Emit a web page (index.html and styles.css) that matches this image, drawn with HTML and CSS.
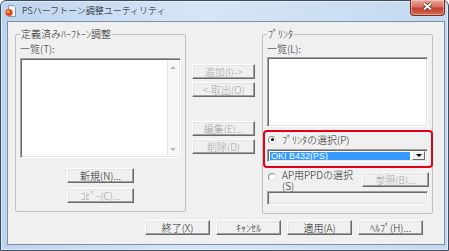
FILE: index.html
```html
<!DOCTYPE html>
<html>
<head>
	<meta charset="utf-8">
	<link rel="stylesheet" href="styles.css">
	<title>PSハーフトーン調整ユーティリティ</title>
</head>
<body>
	<div class="window">
		<div class="titlebar">
			<svg class="appicon" width="11" height="12" viewBox="0 0 11 12">
				<path d="M3.5 0.5h5l2 2v9h-7z" fill="#f6f6f6" stroke="#8a96a6"/>
				<circle cx="4" cy="7.5" r="3.6" fill="#e0471c"/>
				<circle cx="3.2" cy="6.6" r="1.6" fill="#f7a23a"/>
			</svg>
			<span class="title">PSハーフトーン調整ユーティリティ</span>
			<div class="close">
				<svg width="35" height="15" viewBox="0 0 35 15">
					<path d="M14 4.5l7 6M21 4.5l-7 6" stroke="#5a2a22" stroke-width="3.4"/>
					<path d="M14 4.5l7 6M21 4.5l-7 6" stroke="#fff" stroke-width="1.8"/>
				</svg>
			</div>
		</div>

		<div class="client">
			<div class="panes">
				<!-- groupe de gauche -->
				<fieldset class="group">
					<legend>定義済みﾊｰﾌﾄｰﾝ調整</legend>
					<div class="caption">一覧(T):</div>
					<div class="listbox presets">
						<div class="vscroll">
							<span class="arrow up"></span>
							<span class="arrow down"></span>
						</div>
					</div>
					<div class="stack">
						<button class="btn wide">新規(N)...</button>
						<button class="btn wide" disabled>ｺﾋﾟｰ(C)...</button>
					</div>
				</fieldset>

				<!-- boutons du milieu -->
				<div class="middle">
					<button class="btn" disabled>追加(I)-&gt;</button>
					<button class="btn" disabled>&lt;-取出(O)</button>
					<button class="btn spaced" disabled>編集(E)...</button>
					<button class="btn" disabled>削除(D)</button>
				</div>

				<!-- groupe de droite -->
				<fieldset class="group">
					<legend>ﾌﾟﾘﾝﾀ</legend>
					<div class="caption">一覧(L):</div>
					<div class="listbox printers"></div>
					<div class="highlight">
						<label class="radio"><span class="dot checked"></span>ﾌﾟﾘﾝﾀの選択(P)</label>
						<div class="combo">
							<span class="combo-value">OKI B432(PS)</span>
							<span class="combo-btn"></span>
						</div>
					</div>
					<div class="ppd-row">
						<label class="radio two-lines"><span class="dot"></span><span>AP用PPDの選択<br>(S)</span></label>
						<button class="btn browse" disabled>参照(B)...</button>
					</div>
					<div class="field"></div>
				</fieldset>
			</div>

			<div class="actions">
				<button class="btn action">終了(X)</button>
				<button class="btn action">ｷｬﾝｾﾙ</button>
				<button class="btn action">適用(A)</button>
				<button class="btn action">ﾍﾙﾌﾟ(H)...</button>
			</div>
		</div>
	</div>
</body>
</html>
```

FILE: styles.css
```css
* {
	box-sizing: border-box;
}

body {
	margin: 0;
	background: #fff;
	font-family: "Noto Sans CJK JP", "Liberation Sans", sans-serif;
	font-size: 10px;
	font-weight: 300;
	line-height: 12px;
	color: #1c1c1c;
}

.window {
	width: 449px;
	height: 251px;
	border: 1px solid #3b4b60;
	border-radius: 6px 6px 0 0;
	background: linear-gradient(to right, #bdd4ee, #d7e6f6 45%, #c3d8ef);
	box-shadow: inset 0 0 0 1px rgba(255, 255, 255, 0.5);
	display: flex;
	flex-direction: column;
}

/* barre de titre */
.titlebar {
	height: 20px;
	display: flex;
	align-items: center;
	padding-left: 4px;
}
.appicon {
	flex: none;
}
.title {
	margin-left: 6px;
	font-size: 9px;
	color: #000;
}
.close {
	align-self: flex-start;
	margin: -1px 3px 0 auto;
	width: 35px;
	height: 16px;
	border: 1px solid #6e2e26;
	border-top: none;
	border-radius: 0 0 4px 4px;
	background: linear-gradient(#e9a99c, #d4705e 45%, #c0402e 55%, #d26a4f);
	box-shadow: inset 0 0 0 1px rgba(255, 220, 210, 0.5);
}
.close svg {
	display: block;
	margin: -1px 0 0 -1px;
}

/* zone client */
.client {
	margin: 0 3px 5px 6px;
	height: 224px;
	border: 1px solid #7f90a6;
	background: #f0f0f0;
	padding: 6px 11px 0 7px;
}

.panes {
	display: flex;
	align-items: flex-start;
}

.group {
	width: 171px;
	margin: 0;
	padding: 0 4px 8px 4px;
	border: 1px solid #c0c0c0;
	border-radius: 2px;
	min-width: 0;
}
.group legend {
	padding: 0 1px;
	margin: 0;
	line-height: 12px;
}
.group + .middle {
	margin-left: 6px;
}
.middle + .group {
	margin-left: 7px;
}

.caption {
	margin-top: 3px;
	height: 12px;
}

/* listes */
.listbox {
	background: #fff;
	border: 1px solid;
	border-color: #a0a0a0 #fff #fff #a0a0a0;
	box-shadow: inset 1px 1px #696969, inset -1px -1px #e3e3e3;
	padding: 2px;
}
.presets {
	margin-top: 3px;
	height: 100px;
	display: flex;
	justify-content: flex-end;
}
.printers {
	margin-top: 2px;
	height: 70px;
}

.vscroll {
	width: 11px;
	background: #f6f6f6;
	border-left: 1px solid #e4e4e4;
	display: flex;
	flex-direction: column;
	justify-content: space-between;
	align-items: center;
	padding: 5px 0 4px;
}
.arrow {
	width: 0;
	height: 0;
	border-left: 3px solid transparent;
	border-right: 3px solid transparent;
}
.arrow.up {
	border-bottom: 3px solid #b8b8b8;
}
.arrow.down {
	border-top: 3px solid #b8b8b8;
}

/* boutons */
.btn {
	display: block;
	height: 15px;
	padding: 0;
	font-family: inherit;
	font-size: 10px;
	font-weight: 300;
	line-height: 12px;
	color: #1c1c1c;
	background: #f0f0f0;
	border: 1px solid;
	border-color: #fff #696969 #696969 #fff;
	box-shadow: inset -1px -1px #a0a0a0, inset 1px 1px #e3e3e3;
	border-radius: 0;
}
.btn:disabled {
	color: #a0a0a0;
}

.stack {
	margin-top: 10px;
	display: flex;
	flex-direction: column;
	align-items: center;
	gap: 5px;
}
.wide {
	width: 67px;
}

.middle {
	width: 63px;
	padding-top: 36px;
	display: flex;
	flex-direction: column;
	gap: 3px;
}
.middle .btn {
	width: 63px;
}
.middle .spaced {
	margin-top: 21px;
}

/* encadré rouge */
.highlight {
	margin: 3px -5px 0 -4px;
	border: 2px solid #e3001b;
	border-radius: 4px;
	padding: 1px 3px 4px 2px;
}

.radio {
	display: flex;
	align-items: center;
	height: 13px;
}
.dot {
	flex: none;
	width: 8px;
	height: 8px;
	margin: 0 6px 0 1px;
	border-radius: 50%;
	background: #fff;
	border: 1px solid;
	border-color: #8c8c8c #e0e0e0 #e0e0e0 #8c8c8c;
	display: flex;
	align-items: center;
	justify-content: center;
}
.dot.checked::after {
	content: "";
	width: 3px;
	height: 3px;
	border-radius: 50%;
	background: #000;
}

.combo {
	margin-top: 3px;
	height: 13px;
	display: flex;
	background: #fff;
	border: 1px solid;
	border-color: #a0a0a0 #fff #fff #a0a0a0;
	box-shadow: inset 1px 1px #696969, inset -1px -1px #e3e3e3;
	padding: 2px 2px 1px 2px;
}
.combo-value {
	flex: 1;
	background: #3399ff;
	color: #fff;
	font-family: "Liberation Sans", sans-serif;
	font-size: 9px;
	line-height: 9px;
	padding-left: 1px;
	margin-right: 2px;
}
.combo-btn {
	width: 13px;
	margin-top: -1px;
	background: #f0f0f0;
	border: 1px solid;
	border-color: #fff #696969 #696969 #fff;
	display: flex;
	align-items: center;
	justify-content: center;
}
.combo-btn::after {
	content: "";
	border-left: 3px solid transparent;
	border-right: 3px solid transparent;
	border-top: 3px solid #000;
}

.ppd-row {
	margin-top: 1px;
	display: flex;
	justify-content: space-between;
	align-items: flex-start;
}
.two-lines {
	height: auto;
	align-items: flex-start;
	line-height: 11px;
}
.two-lines .dot {
	margin-top: 4px;
}
.browse {
	width: 67px;
	margin-top: 3px;
	margin-right: -1px;
}

.field {
	margin-top: 0;
	height: 14px;
	border: 1px solid;
	border-color: #a0a0a0 #fff #fff #a0a0a0;
	box-shadow: inset 1px 1px #696969, inset -1px -1px #e3e3e3;
	background: #f0f0f0;
}

/* boutons du bas */
.actions {
	margin-top: 6px;
	display: flex;
	justify-content: flex-end;
	gap: 6px;
	padding-right: 10px;
}
.action {
	width: 65px;
}
```
